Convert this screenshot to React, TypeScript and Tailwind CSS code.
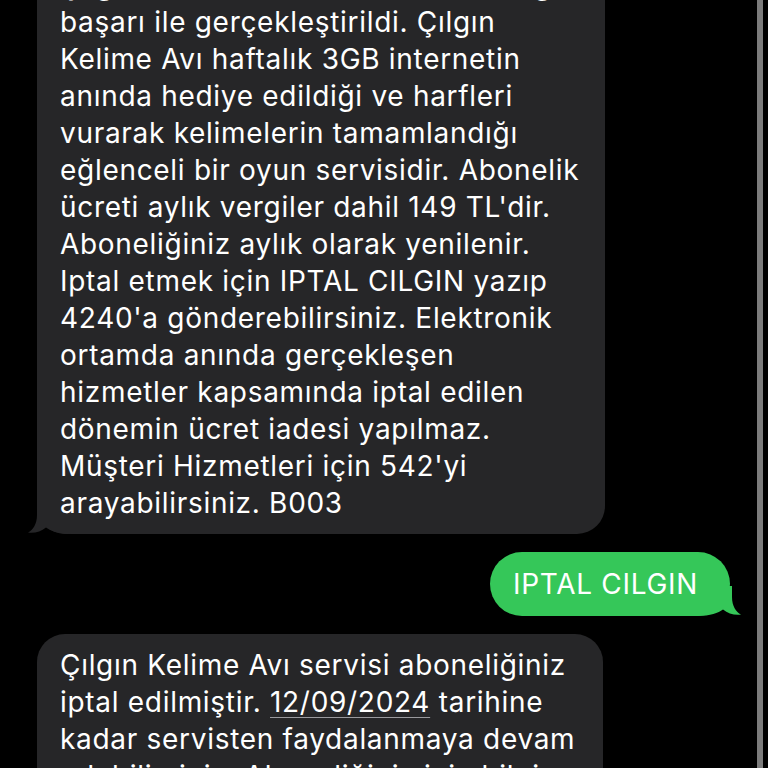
import React from "react";

const font = { fontFamily: "Inter, 'Noto Sans', sans-serif" };

function Line({ children }: { children: React.ReactNode }) {
  return <div className="whitespace-nowrap h-[37px] leading-[37px]">{children}</div>;
}

function LeftTail() {
  return (
    <svg
      className="absolute left-[-9px] bottom-0 z-0"
      width="44"
      height="30"
      viewBox="0 0 44 30"
    >
      <path
        d="M9 0 L9 11 C9 20 5 26 0 28.6 C7 29.4 13 27.5 18 23.5 C23 27 30 30 44 30 L44 0 Z"
        fill="#262628"
      />
    </svg>
  );
}

function RightTail() {
  return (
    <svg
      className="absolute right-[-11px] bottom-0 z-0"
      width="44"
      height="30"
      viewBox="0 0 44 30"
    >
      <path
        d="M35 0 L35 11 C35 20 39 26 44 28.6 C37 29.4 31 27.5 26 23.5 C21 27 14 30 0 30 L0 0 Z"
        fill="#35c759"
      />
    </svg>
  );
}

export default function App() {
  const bubble1 = [
    "Çılgın Kelime Avı servisine aboneliğiniz",
    "başarı ile gerçekleştirildi. Çılgın",
    "Kelime Avı haftalık 3GB internetin",
    "anında hediye edildiği ve harfleri",
    "vurarak kelimelerin tamamlandığı",
    "eğlenceli bir oyun servisidir. Abonelik",
    "ücreti aylık vergiler dahil 149 TL'dir.",
    "Aboneliğiniz aylık olarak yenilenir.",
    "Iptal etmek için IPTAL CILGIN yazıp",
    "4240'a gönderebilirsiniz. Elektronik",
    "ortamda anında gerçekleşen",
    "hizmetler kapsamında iptal edilen",
    "dönemin ücret iadesi yapılmaz.",
    "Müşteri Hizmetleri için 542'yi",
    "arayabilirsiniz. B003",
  ];
  return (
    <div
      className="w-[768px] h-[768px] bg-black overflow-hidden flex text-white text-[28px] tracking-[0.7px]"
      style={font}
    >
      <div className="flex-1 flex flex-col">
        <div className="relative mt-[-46px] ml-[37px] w-[568px] rounded-[28px] bg-[#262628] pl-[23px] pr-[10px] pt-[13px] pb-[12px]">
          <LeftTail />
          <div className="relative z-10">
            {bubble1.map((l, i) => (
              <Line key={i}>{l}</Line>
            ))}
          </div>
        </div>
        <div className="flex justify-end pr-[27px] mt-[18px]">
          <div className="relative w-[240px] h-[64px] rounded-[32px] bg-[#35c759] pl-[23px] flex items-center">
            <RightTail />
            <span className="relative z-10 whitespace-nowrap leading-[37px]">IPTAL CILGIN</span>
          </div>
        </div>
        <div className="relative mt-[18px] ml-[37px] w-[566px] rounded-[28px] bg-[#262628] pl-[23px] pr-[10px] pt-[13px] pb-[12px]">
          <Line>Çılgın Kelime Avı servisi aboneliğiniz</Line>
          <Line>
            iptal edilmiştir.{" "}
            <span className="underline decoration-[#9a9a9e] decoration-1 underline-offset-[5px]">12/09/2024</span>{" "}
            tarihine
          </Line>
          <Line>kadar servisten faydalanmaya devam</Line>
          <Line>edebilirsiniz. Aboneliğiniz için bilgi</Line>
        </div>
      </div>
      <div className="w-[6px] bg-[#7c7c7c]" />
      <div className="w-[5px]" />
    </div>
  );
}
